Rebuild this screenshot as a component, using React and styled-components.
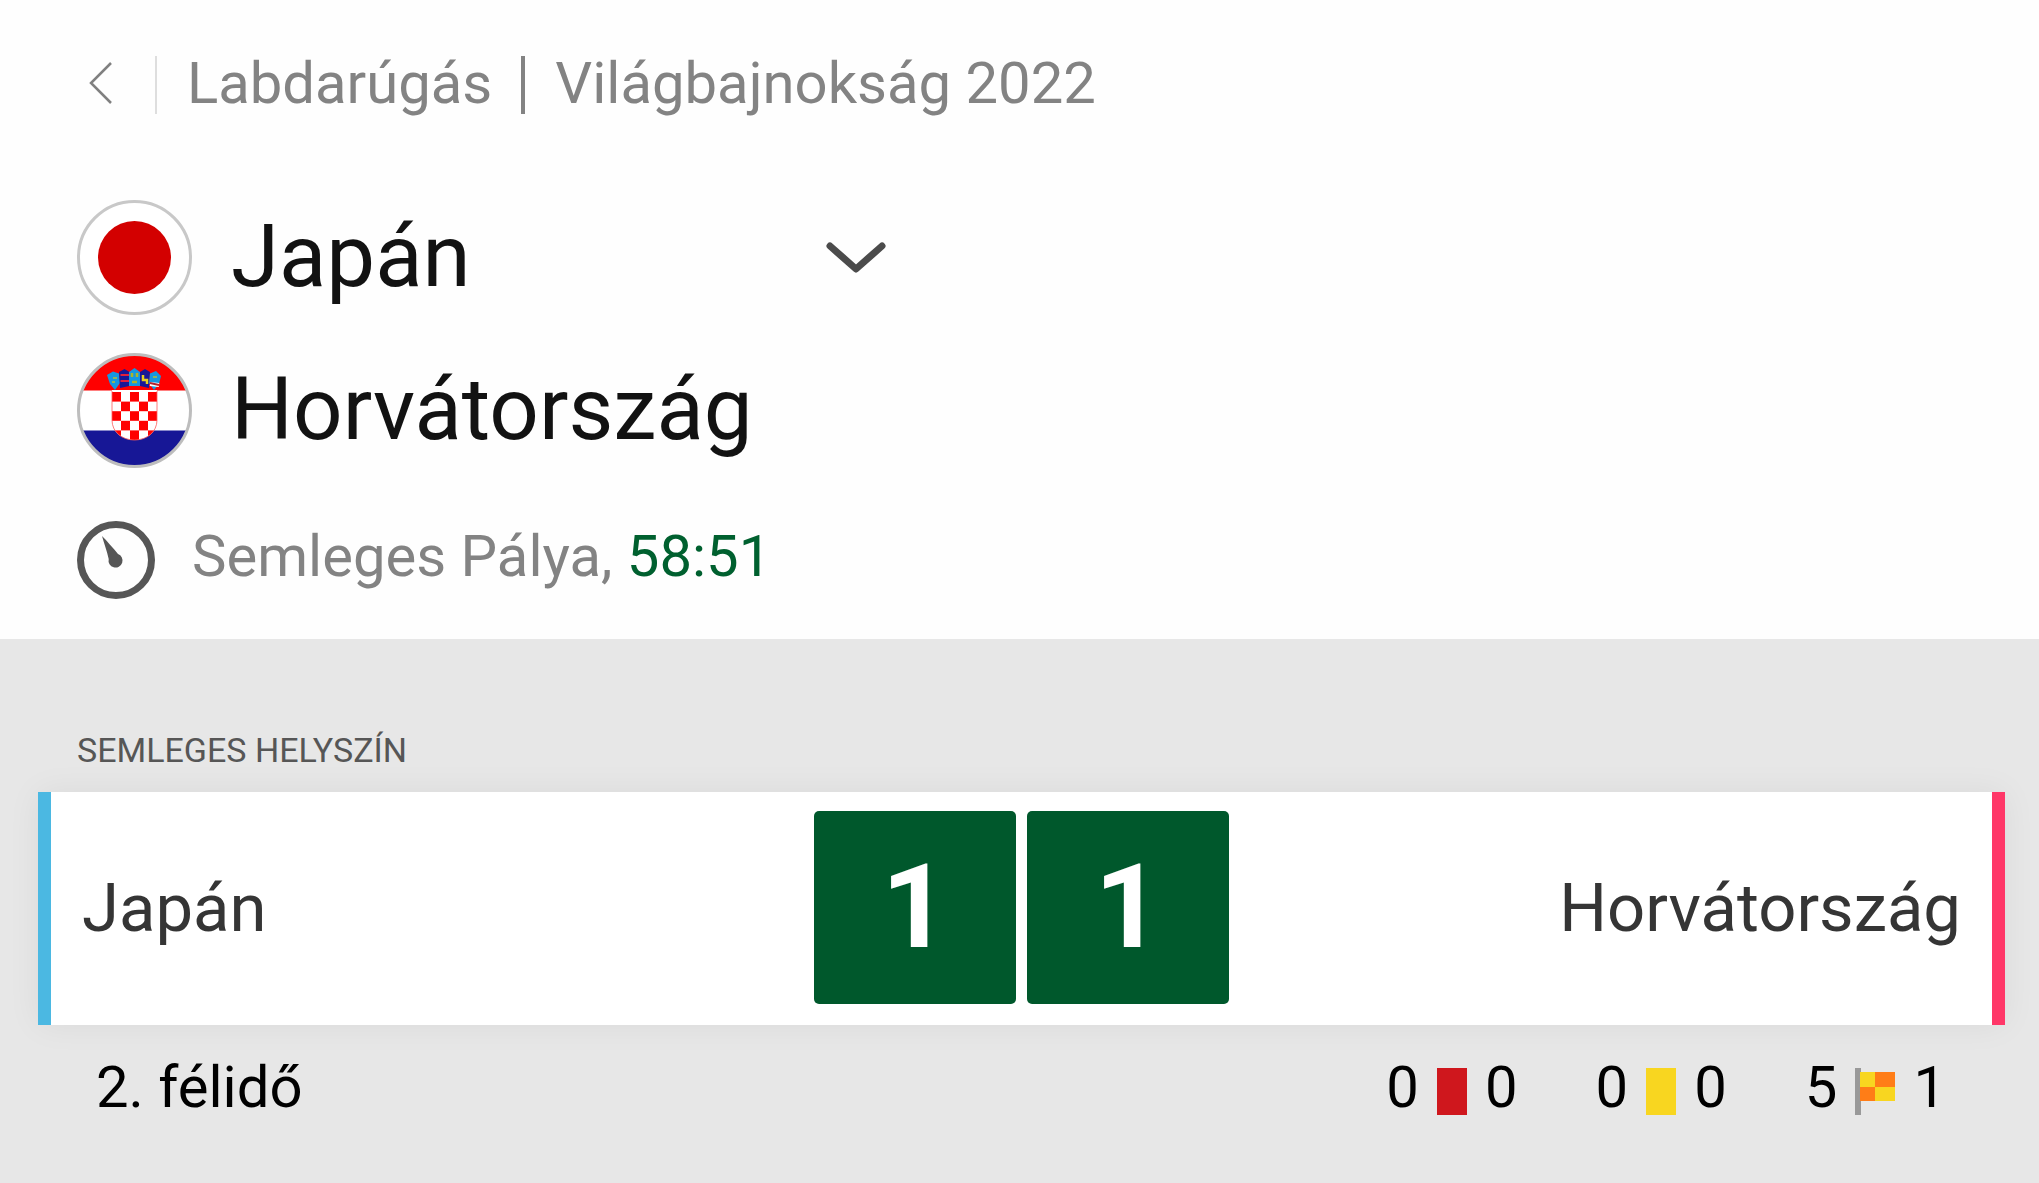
import React from "react";
import styled, { createGlobalStyle } from "styled-components";

const SCORES = [1, 1];

const STATS = [
  { name: "Piros lap", kind: "red", home: 0, away: 0 },
  { name: "Sárga lap", kind: "yellow", home: 0, away: 0 },
  { name: "Szöglet", kind: "corner", home: 5, away: 1 },
];

const CHECKS = [
  [0, 0], [2, 0], [4, 0],
  [1, 1], [3, 1],
  [0, 2], [2, 2], [4, 2],
  [1, 3], [3, 3],
  [0, 4], [2, 4], [4, 4],
];

const JapanFlag = () => (
  <Flag viewBox="0 0 115 115" aria-hidden="true">
    <circle cx="57.5" cy="57.5" r="56" fill="#fff" stroke="#c8c8c8" strokeWidth="3" />
    <circle cx="57.5" cy="57.5" r="36.5" fill="#d30000" />
  </Flag>
);

const CroatiaFlag = () => (
  <Flag viewBox="0 0 115 115" aria-hidden="true">
    <clipPath id="round">
      <circle cx="57.5" cy="57.5" r="56" />
    </clipPath>
    <clipPath id="shield">
      <path d="M35 37H80V67C80 79 70 87 57.5 87S35 79 35 67Z" />
    </clipPath>
    <g clipPath="url(#round)">
      <rect width="115" height="115" fill="#fff" />
      <rect width="115" height="37.5" fill="#ff0000" />
      <rect y="77.5" width="115" height="38" fill="#171796" />
    </g>
    <g clipPath="url(#shield)">
      <rect x="35" y="37" width="45" height="51" fill="#fff" />
      {CHECKS.map(([x, y]) => (
        <rect key={`${x}-${y}`} x={35 + x * 9} y={39 + y * 9.6} width="9" height="9.6" fill="#ff0000" />
      ))}
    </g>
    <path d="M35 38V67C35 79 45 87 57.5 87S80 79 80 67V38" fill="none" stroke="#ff5a5a" strokeWidth="0.8" />
    {/* crown of five small shields */}
    <path d="M30 22L36 18.5L42 20.5L43 30L38 37L33 31Z" fill="#1597e0" />
    <path d="M42 19L47.5 16L52.5 19V33L43 35Z" fill="#171796" />
    <path d="M52 19L57.5 15L63 19V33H52Z" fill="#1597e0" />
    <path d="M63 19L68 16L73 19L72 35L63 33Z" fill="#171796" />
    <path d="M73 20.5L79 18L84 23L82 31L77 37L72 30Z" fill="#1597e0" />
    <path d="M43.5 22H52M43.5 28H52" stroke="#e0203c" strokeWidth="2" />
    <path d="M55 20V24M60 20V24M55 29H60" stroke="#a8b52c" strokeWidth="2.5" />
    <path d="M66 22V27H70V31" fill="none" stroke="#e8d020" strokeWidth="2.5" />
    <path d="M36 25H40M35 29H38M76 24H80" stroke="#8db55c" strokeWidth="2" />
    <path d="M73 31L82 32" stroke="#fff" strokeWidth="4" />
    <path d="M73 30L82 32" stroke="#b3202c" strokeWidth="2" />
    <circle cx="57.5" cy="57.5" r="56" fill="none" stroke="#bdbdbd" strokeWidth="3" />
  </Flag>
);

const ClockIcon = () => (
  <Clock viewBox="0 0 78 78" aria-hidden="true">
    <circle cx="39" cy="39" r="35.5" fill="none" stroke="#565656" strokeWidth="7" />
    <path d="M25 15C30 20 36 27 41 33A7 7 0 1 1 31.7 38C30 30 27 22 25 15Z" fill="#565656" />
  </Clock>
);

const StatIcon = ({ kind }) => {
  if (kind === "corner") {
    return (
      <CornerFlag viewBox="0 0 40 47" aria-hidden="true">
        <path d="M0 0H6V47H0Z" fill="#999" />
        <path d="M5 4H40V33H5Z" fill="#f8d620" />
        <path d="M20 4H40V19H20ZM5 19H20V33H5Z" fill="#ff7d17" />
      </CornerFlag>
    );
  }

  return <Card $color={kind === "red" ? "#cf171d" : "#f8d620"} />;
};

const App = () => {
  return (
    <>
      <GlobalStyle />
      <Header>
        <Nav>
          <BackButton type="button" aria-label="Vissza">
            <svg width="24" height="42" viewBox="0 0 24 42" fill="none">
              <path d="M22 1L2 21L22 41" stroke="#808080" strokeWidth="2.5" />
            </svg>
          </BackButton>
          <Separator $width={2} $color="#dedede" />
          <Crumb href="#labdarugas">Labdarúgás</Crumb>
          <Separator $width={4} $color="#838383" />
          <Crumb href="#vilagbajnoksag">Világbajnokság 2022</Crumb>
        </Nav>
        <Teams>
          <Team>
            <JapanFlag />
            <TeamName>Japán</TeamName>
            <ToggleButton type="button" aria-label="Mérkőzések">
              <svg width="60" height="32" viewBox="0 0 60 32" fill="none">
                <path d="M4 4L30 27L56 4" stroke="#4b4b4b" strokeWidth="7" strokeLinecap="round" strokeLinejoin="round" />
              </svg>
            </ToggleButton>
          </Team>
          <Team>
            <CroatiaFlag />
            <TeamName>Horvátország</TeamName>
          </Team>
        </Teams>
        <Status>
          <ClockIcon />
          <StatusText>
            Semleges Pálya, <Time>58:51</Time>
          </StatusText>
        </Status>
      </Header>
      <Main>
        <Venue>Semleges helyszín</Venue>
        <ScoreCard>
          <Side>Japán</Side>
          <Scores>
            {SCORES.map((score, i) => (
              <Score key={i}>{score}</Score>
            ))}
          </Scores>
          <Side $away>Horvátország</Side>
        </ScoreCard>
        <Footer>
          <span>2. félidő</span>
          <Stats>
            {STATS.map((stat) => (
              <Stat key={stat.kind} title={stat.name}>
                <span>{stat.home}</span>
                <StatIcon kind={stat.kind} />
                <span>{stat.away}</span>
              </Stat>
            ))}
          </Stats>
        </Footer>
      </Main>
    </>
  );
};

export default App;

const GlobalStyle = createGlobalStyle`
  * {
    box-sizing: border-box;
  }

  body {
    margin: 0;
    background-color: #e7e7e7;
    font-family: Roboto, "Liberation Sans", sans-serif;
  }
`;

const Header = styled.header`
  padding: 49px 77px 40px;
  background-color: #fefefe;
`;

const Nav = styled.nav`
  display: flex;
  align-items: center;
  font-size: 58px;
  line-height: 68px;
`;

const IconButton = styled.button`
  display: flex;
  padding: 0;
  border: 0;
  background: none;
  cursor: pointer;
`;

const BackButton = styled(IconButton)`
  margin-left: 12px;
  margin-right: 42px;
`;

const Separator = styled.span`
  width: ${({ $width }) => $width}px;
  height: 58px;
  margin-top: 4px;
  background-color: ${({ $color }) => $color};
`;

const Crumb = styled.a`
  margin: 0 29px 0 30px;
  color: #838383;
  text-decoration: none;
`;

const Teams = styled.div`
  display: flex;
  flex-direction: column;
  gap: 38px;
  max-width: 809px;
  margin-top: 83px;
`;

const Team = styled.div`
  display: flex;
  align-items: center;
`;

const Flag = styled.svg`
  flex: none;
  width: 115px;
  height: 115px;
`;

const TeamName = styled.h1`
  margin: 0 0 4px 39px;
  color: #121212;
  font-size: 87px;
  font-weight: 400;
  line-height: 108px;
`;

const ToggleButton = styled(IconButton)`
  margin-left: auto;
`;

const Status = styled.div`
  display: flex;
  align-items: center;
  margin-top: 53px;
`;

const Clock = styled.svg`
  flex: none;
  width: 78px;
  height: 78px;
`;

const StatusText = styled.p`
  margin: 0 0 8px 37px;
  color: #838383;
  font-size: 58px;
  line-height: 68px;
`;

const Time = styled.time`
  color: #00602f;
`;

const Main = styled.main`
  padding: 91px 34px 40px 38px;
`;

const Venue = styled.h2`
  margin: 0 0 22px 39px;
  color: #565656;
  font-size: 34px;
  font-weight: 400;
  line-height: 40px;
  text-transform: uppercase;
`;

const ScoreCard = styled.section`
  display: grid;
  grid-template-columns: 1fr auto 1fr;
  align-items: center;
  padding: 19px 31px 21px;
  border-left: 13px solid #4bb8e2;
  border-right: 13px solid #ff3768;
  background-color: #fff;
  box-shadow: 0 0 32px rgba(0, 0, 0, 0.06);
`;

const Side = styled.div`
  color: #353535;
  font-size: 67px;
  line-height: 78px;
  text-align: ${({ $away }) => ($away ? "right" : "left")};
`;

const Scores = styled.div`
  display: flex;
  gap: 11px;
`;

const Score = styled.div`
  width: 202px;
  height: 193px;
  border-radius: 5px;
  background-color: #00582c;
  color: #fff;
  font-size: 117px;
  font-weight: 700;
  line-height: 193px;
  text-align: center;
`;

const Footer = styled.div`
  display: flex;
  justify-content: space-between;
  padding: 28px 59px 0 58px;
  color: #000;
  font-size: 58px;
  line-height: 68px;
`;

const Stats = styled.div`
  display: flex;
  gap: 78px;
`;

const Stat = styled.div`
  display: flex;
  align-items: center;
  gap: 18px;
`;

const Card = styled.span`
  width: 30px;
  height: 47px;
  margin-top: 8px;
  background-color: ${({ $color }) => $color};
`;

const CornerFlag = styled.svg`
  width: 40px;
  height: 47px;
  margin-top: 8px;
`;
